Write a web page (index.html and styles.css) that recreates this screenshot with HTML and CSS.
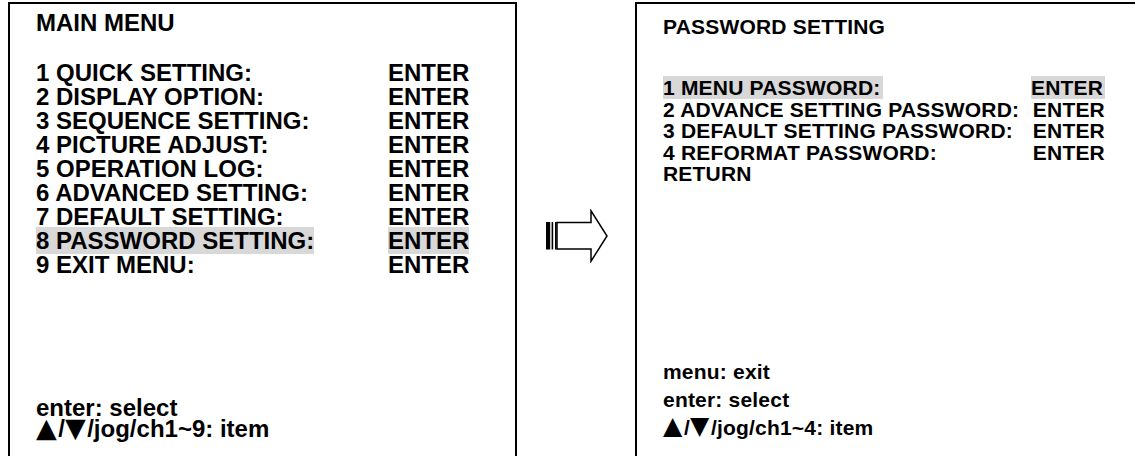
FILE: index.html
```html
<!DOCTYPE html>
<html>
<head>
<meta charset="utf-8">
<link rel="stylesheet" href="styles.css">
</head>
<body>
<div class="page">
  <section class="panel panel-left">
    <div class="title">MAIN MENU</div>
    <div class="rows rows-left">
      <span>1 QUICK SETTING:</span><span>ENTER</span>
      <span>2 DISPLAY OPTION:</span><span>ENTER</span>
      <span>3 SEQUENCE SETTING:</span><span>ENTER</span>
      <span>4 PICTURE ADJUST:</span><span>ENTER</span>
      <span>5 OPERATION LOG:</span><span>ENTER</span>
      <span>6 ADVANCED SETTING:</span><span>ENTER</span>
      <span>7 DEFAULT SETTING:</span><span>ENTER</span>
      <span><span class="hl">8 PASSWORD SETTING:</span></span><span><span class="hl">ENTER</span></span>
      <span>9 EXIT MENU:</span><span>ENTER</span>
    </div>
    <div class="footer footer-left">
      <div>enter: select</div>
      <div><span class="tri">▲</span>/<span class="tri">▼</span>/jog/ch1~9: item</div>
    </div>
  </section>
  <div class="arrow-col">
    <svg class="arrow" width="64" height="54" viewBox="-1 -1 64 54">
      <path d="M11,12.5 H45 V0.75 L61,26 L45,51.25 V39 H11 Z" fill="#fff" stroke="#000" stroke-width="1.5" stroke-linejoin="miter"/>
      <rect x="0" y="12" width="4.2" height="27.5" fill="#000"/>
      <rect x="5.6" y="12" width="1.6" height="27.5" fill="#000"/>
      <rect x="9" y="12" width="1.6" height="27.5" fill="#000"/>
    </svg>
  </div>
  <section class="panel panel-right">
    <div class="title title-right">PASSWORD SETTING</div>
    <div class="rows rows-right">
      <span><span class="hl hl-r">1 MENU PASSWORD:</span></span><span class="enter-r"><span class="hl hl-r">ENTER</span></span>
      <span>2 ADVANCE SETTING PASSWORD:</span><span class="enter-r">ENTER</span>
      <span>3 DEFAULT SETTING PASSWORD:</span><span class="enter-r">ENTER</span>
      <span>4 REFORMAT PASSWORD:</span><span class="enter-r">ENTER</span>
      <span>RETURN</span><span></span>
    </div>
    <div class="footer footer-right">
      <div>menu: exit</div>
      <div>enter: select</div>
      <div><span class="tri tri-r">▲</span>/<span class="tri tri-r">▼</span>/jog/ch1~4: item</div>
    </div>
  </section>
</div>
</body>
</html>
```

FILE: styles.css
```css
html, body {
  margin: 0;
  padding: 0;
  overflow: hidden;
  background: #fff;
}
body {
  width: 1135px;
  height: 456px;
  font-family: "Liberation Sans", Arial, sans-serif;
  font-weight: bold;
  color: #000;
}
.page {
  display: flex;
  align-items: flex-start;
  padding: 2px 0 0 8px;
  width: 1200px;
}
.panel {
  box-sizing: border-box;
  height: 520px;
  border-top: 2px solid #000;
  border-left: 2px solid #000;
  flex: none;
}
.panel-left {
  width: 509px;
  border-right: 2px solid #000;
  padding: 7px 0 0 26px;
  font-size: 24px;
  line-height: 24px;
}
.title {
  white-space: nowrap;
}
.rows {
  display: grid;
  white-space: nowrap;
}
.rows-left {
  margin-top: 26px;
  grid-template-columns: 352px auto;
}
.hl {
  background: #d8d8d8;
}
.footer-left {
  margin-top: 120px;
  line-height: 21px;
  white-space: nowrap;
}
.tri {
  font-family: "DejaVu Sans", sans-serif;
  font-weight: normal;
  font-size: 27px;
  line-height: 0;
  position: relative;
  top: 0;
  margin-right: 1.5px;
}
.tri-r {
  font-size: 25px;
  top: -1px;
  margin-right: 1.5px;
}
.arrow-col {
  width: 118px;
  flex: none;
  padding: 207px 0 0 28px;
  box-sizing: border-box;
}
.arrow {
  display: block;
}
.panel-right {
  width: 540px;
  padding: 12px 0 0 26px;
  font-size: 21px;
  line-height: 21.5px;
  letter-spacing: 0.2px;
}
.rows-right {
  margin-top: 39.5px;
  grid-template-columns: 368px 74px;
}
.enter-r {
  text-align: right;
}
.hl-r {
  padding-right: 2px;
}
.footer-right {
  margin-top: 173px;
  line-height: 28px;
  white-space: nowrap;
}
```
